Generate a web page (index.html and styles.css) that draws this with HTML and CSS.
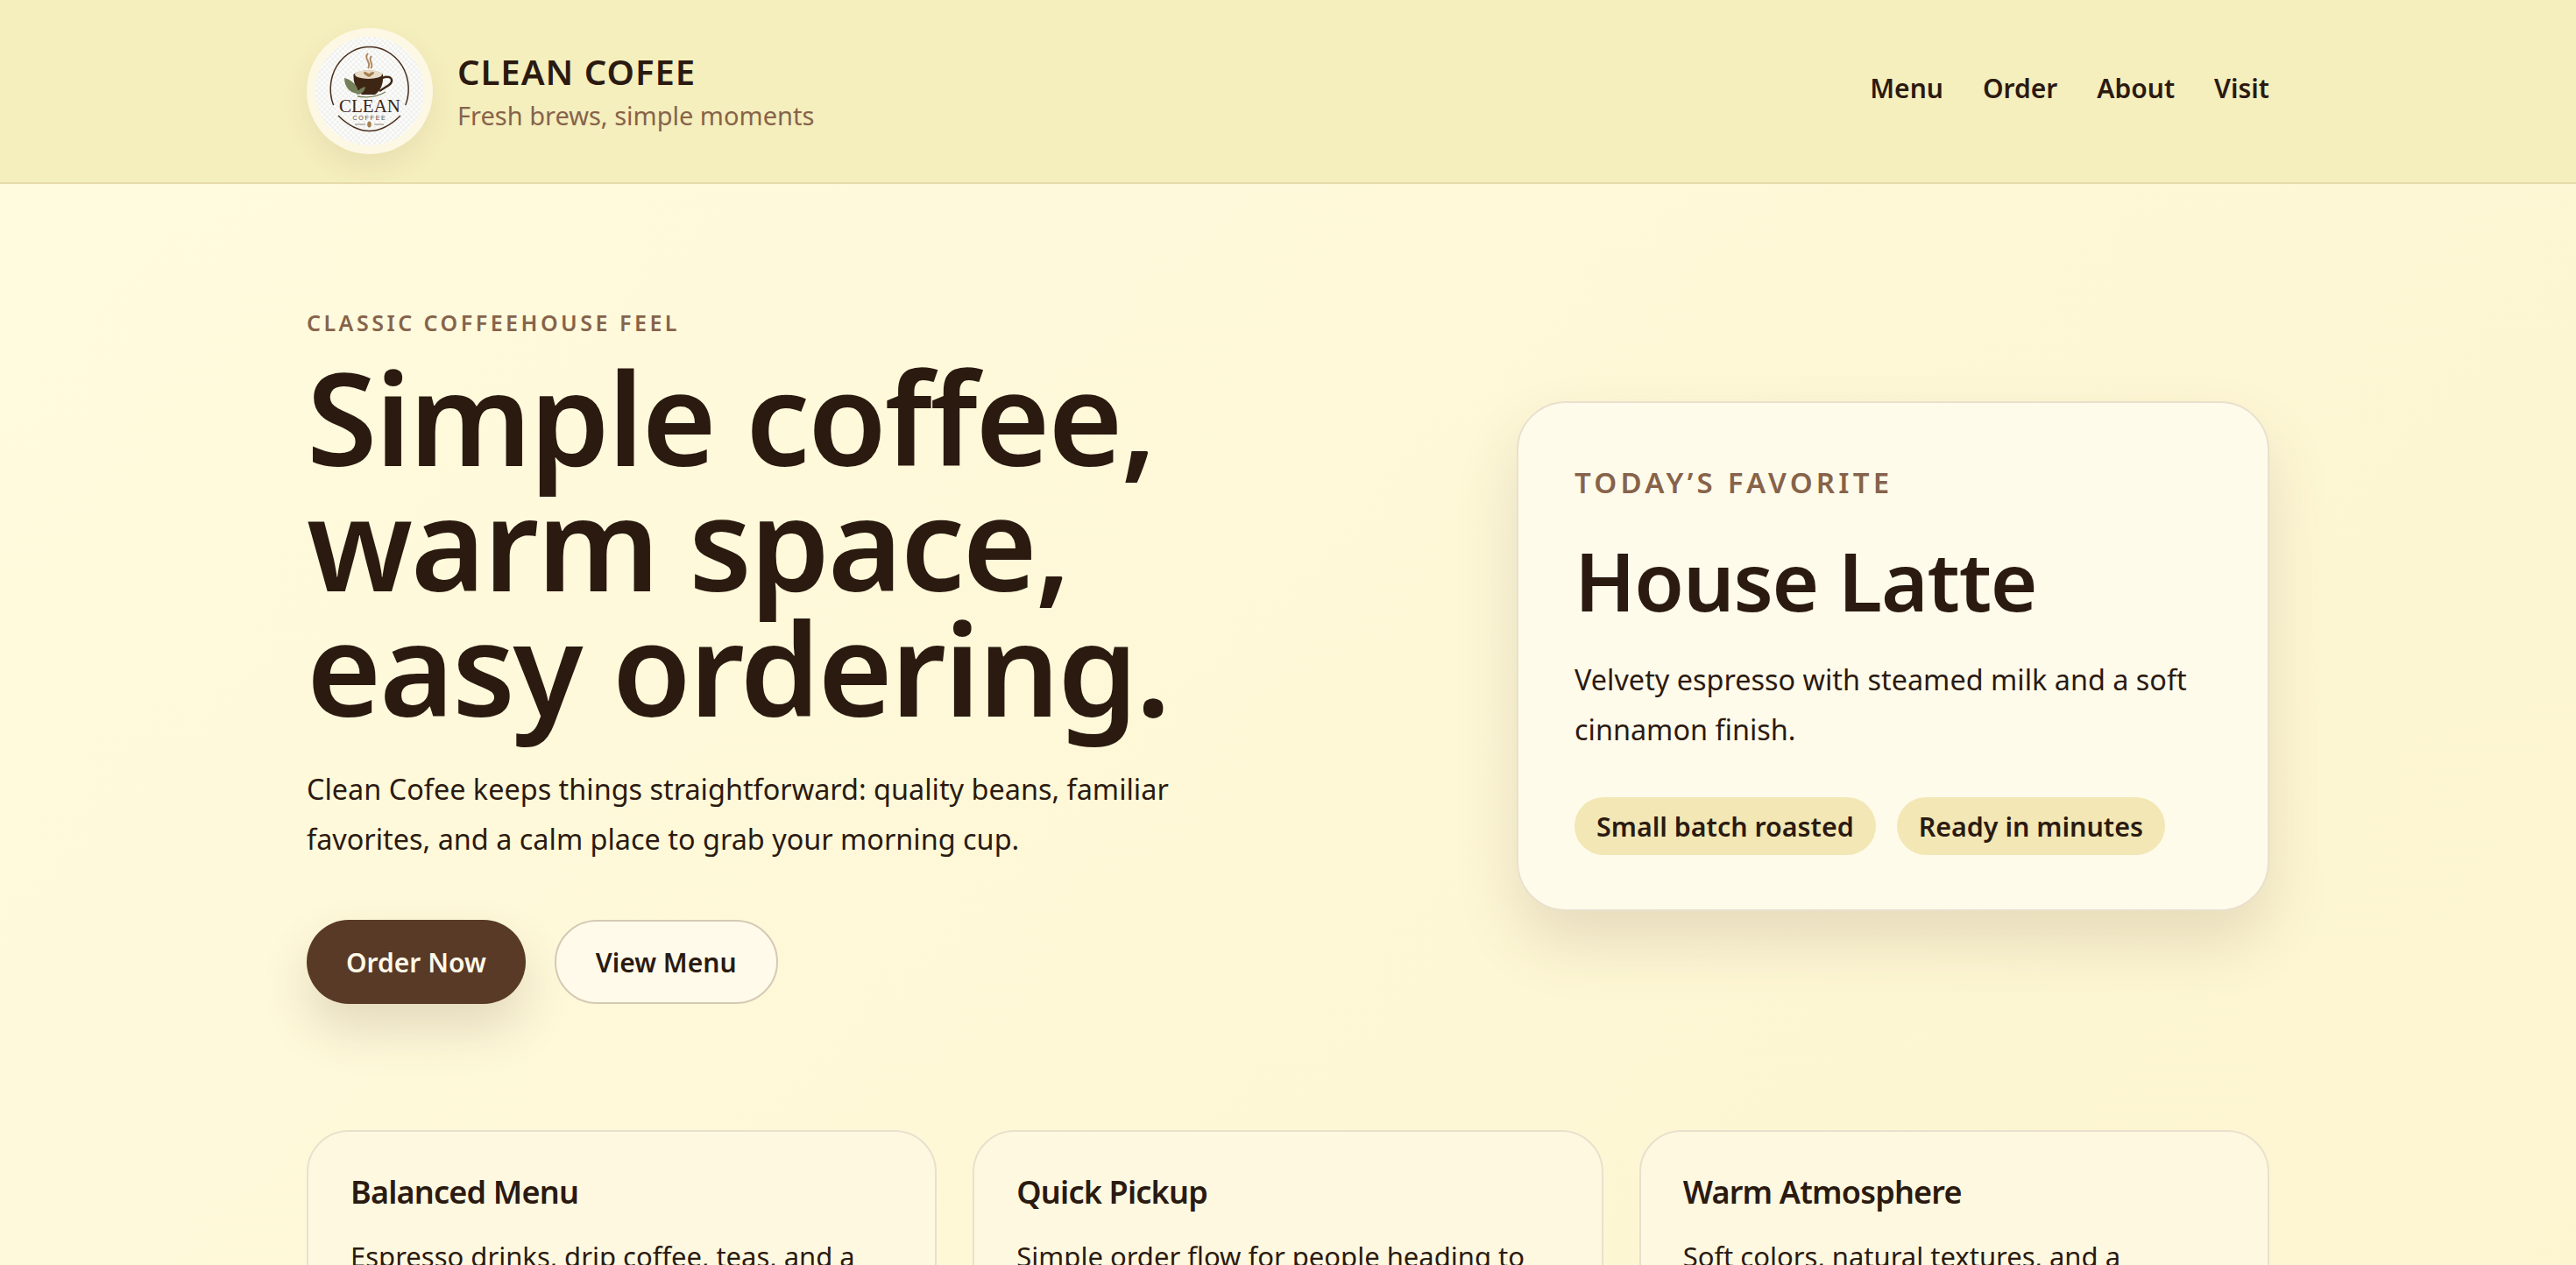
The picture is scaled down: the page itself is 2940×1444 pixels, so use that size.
FILE: index.html
```html
<!DOCTYPE html>
<html lang="en">
<head>
    <meta charset="UTF-8">
    <meta name="viewport" content="width=device-width, initial-scale=1.0">
    <title>Clean Cofee</title>
    <link rel="stylesheet" href="styles.css">
</head>
<body>
    <header class="site-header">
        <div class="wrap header-inner">
            <div class="brand">
                <div class="logo">
                    <svg viewBox="0 0 124 124" width="124" height="124">
                        <defs>
                            <pattern id="check" width="6" height="6" patternUnits="userSpaceOnUse">
                                <rect width="6" height="6" fill="#fbfbfa"/>
                                <rect width="3" height="3" fill="#f1f1ef"/>
                                <rect x="3" y="3" width="3" height="3" fill="#f1f1ef"/>
                            </pattern>
                        </defs>
                        <circle cx="62" cy="62" r="62" fill="url(#check)"/>
                        <path d="M20.6 78 A44.5 48 0 1 1 102.8 78" fill="none" stroke="#4a2f1c" stroke-width="1.5"/>
                        <path d="M26 90 Q61.7 125 97 90" fill="none" stroke="#4a2f1c" stroke-width="1.5"/>
                        <path d="M60 19 C54 25 65 29 60 36 M64 22 C59 28 68 31 63 36" fill="none" stroke="#b08a62" stroke-width="2"/>
                        <path d="M43.5 43 C50 37 71 37 77 43 C78 54 74 62 68 66 L53 66 C47 62 43 53 43.5 43 Z" fill="#3e2614"/>
                        <ellipse cx="60.5" cy="43" rx="15.5" ry="5" fill="#e8dcc6"/>
                        <path d="M61 46 C55 43 53 40 57 40 L61 42 L65 40 C69 40 67 43 61 46 Z" fill="#a5804f"/>
                        <path d="M76 47 C87 43 90 50 84 55 L73 62" fill="none" stroke="#3e2614" stroke-width="2.4"/>
                        <path d="M33 47 C44 50 50 58 48 65 C39 64 33 57 33 47 Z" fill="#75805a"/>
                        <path d="M47 66 C48 61 52 58 57 57 C56 63 52 66 47 66 Z" fill="#75805a"/>
                        <path d="M48 68 Q66 71 80 63" fill="none" stroke="#75805a" stroke-width="1.3"/>
                        <text x="62" y="86" text-anchor="middle" class="logo-clean">CLEAN</text>
                        <text x="62" y="95" text-anchor="middle" class="logo-coffee">COFFEE</text>
                        <path d="M45 100 H57 M67 100 H78" stroke="#8a7460" stroke-width="0.9"/>
                        <ellipse cx="61.5" cy="100" rx="2.3" ry="3.6" fill="#a5804f"/>
                    </svg>
                </div>
                <div class="brand-text">
                    <div class="brand-name">CLEAN COFEE</div>
                    <div class="brand-tag">Fresh brews, simple moments</div>
                </div>
            </div>
            <nav class="nav">
                <a href="#">Menu</a>
                <a href="#">Order</a>
                <a href="#">About</a>
                <a href="#">Visit</a>
            </nav>
        </div>
    </header>

    <main class="wrap">
        <section class="hero">
            <div class="hero-copy">
                <p class="eyebrow">CLASSIC COFFEEHOUSE FEEL</p>
                <h1>Simple coffee,<br>warm space,<br>easy ordering.</h1>
                <p class="lead">Clean Cofee keeps things straightforward: quality beans, familiar favorites, and a calm place to grab your morning cup.</p>
                <div class="actions">
                    <a class="btn btn-primary" href="#">Order Now</a>
                    <a class="btn btn-ghost" href="#">View Menu</a>
                </div>
            </div>
            <aside class="fav-card">
                <p class="fav-label">TODAY’S FAVORITE</p>
                <h2>House Latte</h2>
                <p class="fav-text">Velvety espresso with steamed milk and a soft cinnamon finish.</p>
                <div class="tags">
                    <span class="tag">Small batch roasted</span>
                    <span class="tag">Ready in minutes</span>
                </div>
            </aside>
        </section>

        <section class="features">
            <article class="feature">
                <h3>Balanced Menu</h3>
                <p>Espresso drinks, drip coffee, teas, and a</p>
            </article>
            <article class="feature">
                <h3>Quick Pickup</h3>
                <p>Simple order flow for people heading to</p>
            </article>
            <article class="feature">
                <h3>Warm Atmosphere</h3>
                <p>Soft colors, natural textures, and a</p>
            </article>
        </section>
    </main>
</body>
</html>
```

FILE: styles.css
```css
* {
    box-sizing: border-box;
}

html, body {
    height: 1444px;
    overflow: hidden;
}

body {
    margin: 0;
    font-family: "Noto Sans", Lato, sans-serif;
    color: #2b1a10;
    background: linear-gradient(135deg, #fffbdf 0%, #fdf5d0 100%);
}

p, h1, h2, h3 {
    margin: 0;
}

a {
    color: inherit;
    text-decoration: none;
}

.wrap {
    width: 2240px;
    margin: 0 auto;
}

/* header */
.site-header {
    height: 210px;
    background-color: #f5eebd;
    border-bottom: 2px solid #e6dcaa;
}

.header-inner {
    height: 208px;
    display: flex;
    justify-content: space-between;
    align-items: center;
}

.brand {
    display: flex;
    align-items: center;
    gap: 28px;
}

.logo {
    width: 144px;
    height: 144px;
    border-radius: 50%;
    background-color: #fdf8e4;
    box-shadow: 0 14px 32px rgba(90, 60, 20, 0.08);
    display: flex;
    align-items: center;
    justify-content: center;
}

.logo-clean {
    font-family: "Liberation Serif", serif;
    font-size: 21px;
    fill: #3e2614;
}

.logo-coffee {
    font-family: "Liberation Sans", sans-serif;
    font-size: 7px;
    letter-spacing: 1.8px;
    fill: #5c4a38;
}

.brand-text {
    padding-top: 4px;
}

.brand-name {
    font-size: 40px;
    font-weight: 650;
    letter-spacing: 1px;
    line-height: 48px;
}

.brand-tag {
    font-size: 29px;
    line-height: 44px;
    margin-top: 4px;
    color: #86634a;
}

.nav {
    display: flex;
    gap: 45px;
    font-size: 30px;
    font-weight: 650;
    margin-bottom: 8px;
}

/* hero */
.hero {
    display: grid;
    grid-template-columns: 1fr 859px;
    align-items: center;
    padding-top: 142px;
}

.eyebrow {
    font-size: 25px;
    font-weight: 650;
    letter-spacing: 3.5px;
    color: #86634a;
    line-height: 32px;
}

h1 {
    font-size: 146px;
    line-height: 143px;
    font-weight: 650;
    letter-spacing: -2.4px;
    margin-top: 20px;
}

.lead {
    font-size: 32.4px;
    line-height: 57px;
    width: 1000px;
    margin-top: 39px;
}

.actions {
    display: flex;
    gap: 33px;
    margin-top: 64px;
}

.btn {
    height: 96px;
    padding: 0 45px;
    border-radius: 48px;
    font-size: 30px;
    font-weight: 650;
    display: flex;
    align-items: center;
}

.btn-primary {
    background-color: #583a27;
    color: #fff8e8;
    box-shadow: 0 28px 56px rgba(88, 58, 39, 0.16);
}

.btn-ghost {
    background-color: #fffaea;
    border: 2px solid #d6c9b4;
}

.fav-card {
    height: 582px;
    padding: 62px 64px;
    background-color: #fffbeb;
    border: 2px solid #e9e0cd;
    border-radius: 56px;
    box-shadow: 0 36px 72px rgba(88, 58, 39, 0.14);
}

.fav-label {
    font-size: 33px;
    font-weight: 650;
    letter-spacing: 4.2px;
    line-height: 58px;
    color: #86634a;
}

h2 {
    font-size: 92px;
    font-weight: 650;
    letter-spacing: -1.2px;
    line-height: 110px;
    margin-top: 28px;
}

.fav-text {
    font-size: 32.4px;
    line-height: 57px;
    margin-top: 29px;
}

.tags {
    display: flex;
    gap: 24px;
    margin-top: 49px;
}

.tag {
    height: 66px;
    padding: 0 25px;
    border-radius: 33px;
    background-color: #f2e7b5;
    font-size: 30.4px;
    font-weight: 650;
    display: flex;
    align-items: center;
}

/* feature cards */
.features {
    display: grid;
    grid-template-columns: repeat(3, 1fr);
    gap: 41px;
    margin-top: 144px;
}

.feature {
    height: 300px;
    padding: 45px 48px;
    background-color: #fff8e0;
    border: 2px solid #e9e0cd;
    border-radius: 48px;
}

h3 {
    font-size: 36px;
    font-weight: 650;
    letter-spacing: -0.8px;
    line-height: 48px;
}

.feature p {
    font-size: 31px;
    line-height: 52px;
    margin-top: 23px;
}
```
